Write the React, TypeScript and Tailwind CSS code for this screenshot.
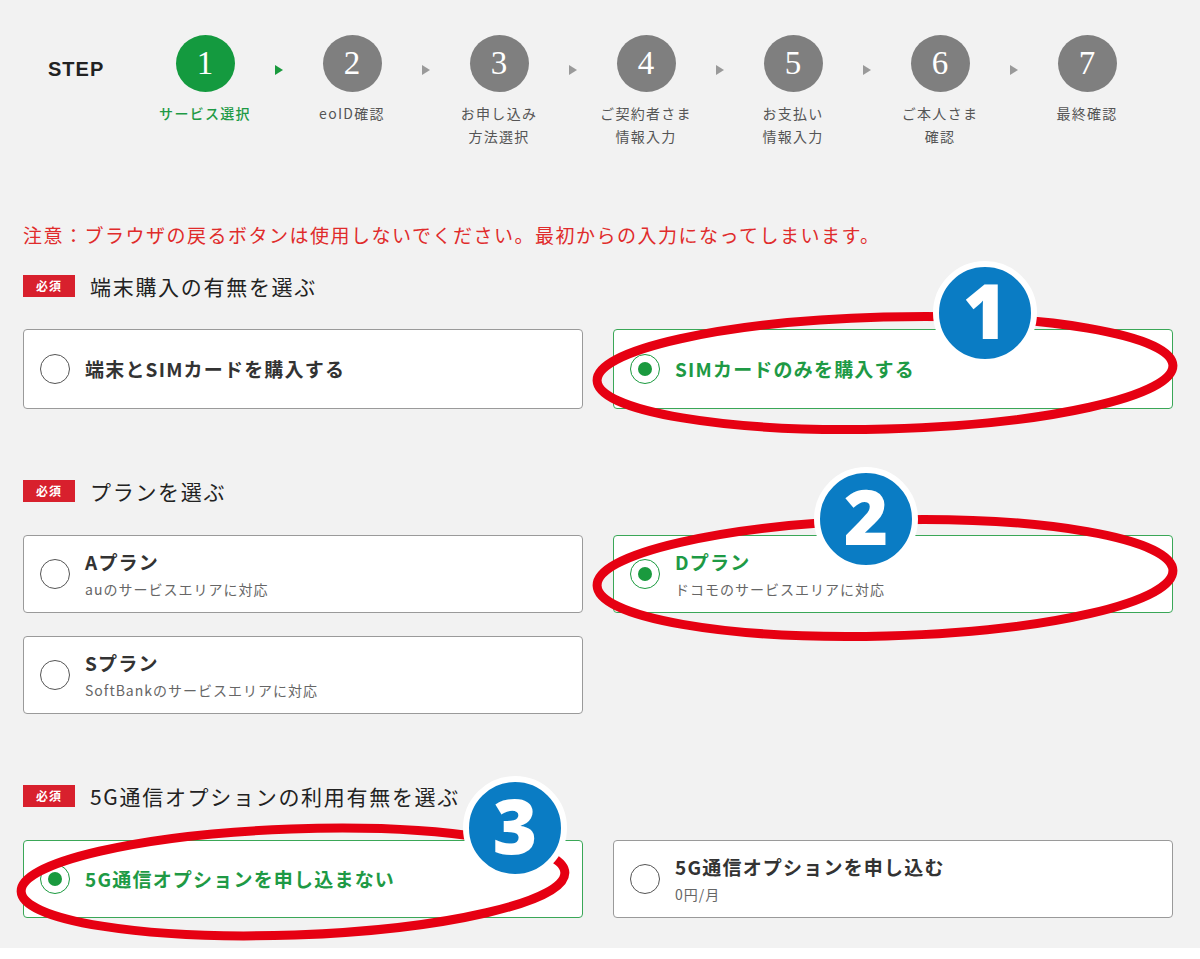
import React from "react";

const JP = '"Noto Sans CJK JP", "Noto Sans", sans-serif';

const steps: { n: number; label: string[] }[] = [
  { n: 1, label: ["サービス選択"] },
  { n: 2, label: ["eoID確認"] },
  { n: 3, label: ["お申し込み", "方法選択"] },
  { n: 4, label: ["ご契約者さま", "情報入力"] },
  { n: 5, label: ["お支払い", "情報入力"] },
  { n: 6, label: ["ご本人さま", "確認"] },
  { n: 7, label: ["最終確認"] },
];

function Radio({ checked }: { checked?: boolean }) {
  return checked ? (
    <div className="w-[30px] h-[30px] shrink-0 rounded-full border-[1.5px] border-[#1a9a3e] bg-white flex items-center justify-center">
      <div className="w-[14px] h-[14px] rounded-full bg-[#1a9a3e]" />
    </div>
  ) : (
    <div className="w-[30px] h-[30px] shrink-0 rounded-full border-[1.5px] border-[#555] bg-white" />
  );
}

function Card({
  title,
  sub,
  checked,
  h = "h-[78px]",
}: {
  title: string;
  sub?: string;
  checked?: boolean;
  h?: string;
}) {
  return (
    <div
      className={`${h} rounded-[4px] bg-white flex items-center pl-[16px] gap-[15px] border ${
        checked ? "border-[#3aa757]" : "border-[#9a9a9a]"
      }`}
    >
      <Radio checked={checked} />
      <div className="flex flex-col">
        <div
          className={`text-[19px] leading-[24px] font-bold tracking-[1.2px] ${
            checked ? "text-[#1e9a45]" : "text-[#333]"
          }`}
        >
          {title}
        </div>
        {sub && (
          <div className="mt-[5px] text-[14px] leading-[20px] tracking-[1px] text-[#666]">
            {sub}
          </div>
        )}
      </div>
    </div>
  );
}

function Heading({ text, className = "" }: { text: string; className?: string }) {
  return (
    <div className={`flex items-center h-[24px] gap-[15px] ${className}`}>
      <div className="w-[52px] h-[22px] bg-[#d8202d] flex items-center justify-center text-white text-[12px] font-bold tracking-[1px]">
        必須
      </div>
      <div className="text-[21px] leading-[24px] tracking-[1.7px] text-[#222]">{text}</div>
    </div>
  );
}

export default function App() {
  return (
    <div className="w-[1200px] h-[959px] bg-white relative overflow-hidden" style={{ fontFamily: JP }}>
      <div className="bg-[#f2f2f2] h-[948px]">
        {/* STEP header */}
        <div className="h-[222px] pt-[35px] flex items-start">
          <div className="w-[150px] pl-[48px] pt-[22px]">
            <span
              className="text-[20px] leading-[24px] font-bold tracking-[1px] text-[#222]"
              style={{ fontFamily: '"Liberation Sans", Arial, sans-serif' }}
            >
              STEP
            </span>
          </div>
          {steps.map((s, i) => (
            <React.Fragment key={s.n}>
              <div className="w-[110px] flex flex-col items-center">
                <div
                  className={`w-[59px] h-[57px] rounded-[50%] flex items-center justify-center text-white text-[33px] ${
                    i === 0 ? "bg-[#149a3f]" : "bg-[#7f7f7f]"
                  }`}
                  style={{ fontFamily: '"Liberation Serif", "Times New Roman", serif' }}
                >
                  {s.n}
                </div>
                <div
                  className={`mt-[10px] text-[14px] leading-[23px] tracking-[1.3px] text-center whitespace-nowrap ${
                    i === 0 ? "text-[#1e9a45] font-medium" : "text-[#555]"
                  }`}
                >
                  {s.label.map((l) => (
                    <div key={l}>{l}</div>
                  ))}
                </div>
              </div>
              {i < steps.length - 1 && (
                <div className="w-[37px] pt-[30px] flex justify-center">
                  <div
                    className={`w-0 h-0 border-y-[5px] border-y-transparent border-l-[8px] ${
                      i === 0 ? "border-l-[#1a9a3e]" : "border-l-[#9a9a9a]"
                    }`}
                  />
                </div>
              )}
            </React.Fragment>
          ))}
        </div>

        <div className="pl-[23px]">
          <div className="text-[19px] leading-[26px] tracking-[1.5px] text-[#e02b2b]">
            注意：ブラウザの戻るボタンは使用しないでください。最初からの入力になってしまいます。
          </div>

          <Heading text="端末購入の有無を選ぶ" className="mt-[26px]" />
          <div className="mt-[31px] grid grid-cols-[560px_560px] gap-x-[30px]">
            <Card title="端末とSIMカードを購入する" h="h-[80px]" />
            <Card title="SIMカードのみを購入する" checked h="h-[80px]" />
          </div>

          <Heading text="プランを選ぶ" className="mt-[70px]" />
          <div className="mt-[32px] grid grid-cols-[560px_560px] gap-x-[30px] gap-y-[23px]">
            <Card title="Aプラン" sub="auのサービスエリアに対応" />
            <Card title="Dプラン" sub="ドコモのサービスエリアに対応" checked />
            <Card title="Sプラン" sub="SoftBankのサービスエリアに対応" />
          </div>

          <Heading text="5G通信オプションの利用有無を選ぶ" className="mt-[70px]" />
          <div className="mt-[32px] grid grid-cols-[560px_560px] gap-x-[30px]">
            <Card title="5G通信オプションを申し込まない" checked />
            <Card title="5G通信オプションを申し込む" sub="0円/月" />
          </div>
        </div>
      </div>

      {/* annotation overlay */}
      <svg
        className="absolute inset-0 pointer-events-none"
        width="1200"
        height="959"
        viewBox="0 0 1200 959"
      >
        <g fill="none" stroke="#e60012" strokeWidth="9">
          <ellipse cx="885" cy="373" rx="288" ry="56" transform="rotate(-1.5 885 373)" />
          <ellipse cx="885" cy="578" rx="288" ry="58" transform="rotate(-1.5 885 578)" />
          <ellipse cx="293" cy="882" rx="272" ry="53" transform="rotate(-2 293 882)" />
        </g>
        {[
          { cx: 985, cy: 313, n: "1" },
          { cx: 866, cy: 519, n: "2" },
          { cx: 515, cy: 828, n: "3" },
        ].map((c) => (
          <g key={c.n}>
            <circle cx={c.cx} cy={c.cy} r="49" fill="#0a7cc4" stroke="#fff" strokeWidth="6" />
            <text
              x={c.cx}
              y={c.cy + 26}
              textAnchor="middle"
              fill="#fff"
              fontSize="76"
              fontWeight="800"
              style={{ fontFamily: '"Open Sans", "Noto Sans", sans-serif' }}
            >
              {c.n}
            </text>
          </g>
        ))}
      </svg>
    </div>
  );
}
